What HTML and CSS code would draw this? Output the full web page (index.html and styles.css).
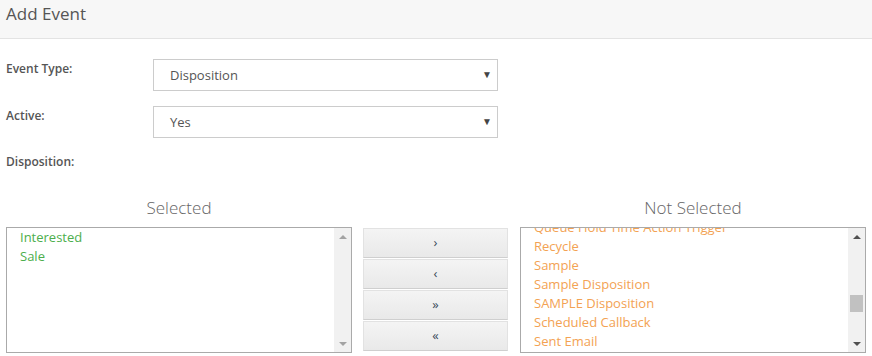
FILE: index.html
```html
<!DOCTYPE html>
<html lang="en">
<head>
  <meta charset="UTF-8">
  <title>Add Event</title>
  <link rel="stylesheet" href="styles.css">
</head>
<body>
  <!-- Header -->
  <div class="panel-heading">Add Event</div>

  <div class="panel-body">
    <!-- Form rows -->
    <div class="form-row">
      <label class="form-label">Event Type:</label>
      <div class="select-box"><span>Disposition</span><span class="caret">&#9660;</span></div>
    </div>
    <div class="form-row">
      <label class="form-label">Active:</label>
      <div class="select-box"><span>Yes</span><span class="caret">&#9660;</span></div>
    </div>
    <div class="form-row short">
      <label class="form-label">Disposition:</label>
    </div>

    <!-- Dual list picker -->
    <div class="picker">
      <div class="picker-col">
        <h4>Selected</h4>
        <div class="list-box">
          <ul class="list-items selected-items">
            <li>Interested</li>
            <li>Sale</li>
          </ul>
          <div class="scrollbar">
            <span class="arrow up"></span>
            <span class="track"></span>
            <span class="arrow down"></span>
          </div>
        </div>
      </div>

      <div class="picker-buttons">
        <button>&rsaquo;</button>
        <button>&lsaquo;</button>
        <button>&raquo;</button>
        <button>&laquo;</button>
      </div>

      <div class="picker-col">
        <h4>Not Selected</h4>
        <div class="list-box">
          <ul class="list-items other-items scrolled">
            <li>Queue Hold Time Action Trigger</li>
            <li>Recycle</li>
            <li>Sample</li>
            <li>Sample Disposition</li>
            <li>SAMPLE Disposition</li>
            <li>Scheduled Callback</li>
            <li>Sent Email</li>
          </ul>
          <div class="scrollbar dark">
            <span class="arrow up"></span>
            <span class="track"><span class="thumb"></span></span>
            <span class="arrow down"></span>
          </div>
        </div>
      </div>
    </div>
  </div>
</body>
</html>
```

FILE: styles.css
```css
body {
  margin: 0;
  font-family: "Open Sans", Arial, sans-serif;
  color: #555;
  background: #fff;
}
.panel-heading {
  height: 38px;
  line-height: 28px;
  padding: 0 6px;
  font-size: 17px;
  background-color: #f7f7f7;
  border-bottom: 1px solid #e3e3e3;
}
.panel-body {
  padding: 20px 6px 0 6px;
}
.form-row {
  display: flex;
  align-items: flex-start;
  height: 32px;
  margin-bottom: 15px;
}
.form-row.short {
  height: 20px;
  margin-bottom: 23px;
}
.form-label {
  width: 147px;
  font-size: 12px;
  font-weight: 600;
  padding-top: 1px;
}
.form-row.short .form-label {
  padding-top: 0;
}
.select-box {
  width: 345px;
  height: 32px;
  box-sizing: border-box;
  border: 1px solid #ccc;
  display: flex;
  align-items: center;
  justify-content: space-between;
  padding: 0 5px 0 16px;
  font-size: 13px;
  color: #555;
}
.select-box .caret {
  font-size: 10px;
  color: #444;
  margin-top: -3px;
}
.picker {
  display: flex;
  align-items: flex-end;
}
.picker-col {
  width: 346px;
}
.picker-col h4 {
  margin: 0 0 7px 0;
  text-align: center;
  font-size: 17px;
  font-weight: 300;
  color: #666;
  line-height: 24px;
}
.list-box {
  height: 126px;
  box-sizing: border-box;
  border: 1px solid #aaa;
  display: flex;
  overflow: hidden;
}
.list-items {
  flex: 1;
  list-style: none;
  margin: 0;
  padding: 0 0 0 13px;
  font-size: 13px;
  line-height: 19px;
}
.list-items.scrolled {
  margin-top: -10px;
}
.selected-items {
  color: #4cae4c;
}
.other-items {
  color: #f3a253;
}
.scrollbar {
  width: 17px;
  background: #f1f1f1;
  display: flex;
  flex-direction: column;
  align-items: center;
}
.scrollbar .arrow {
  height: 17px;
  width: 17px;
  display: flex;
  align-items: center;
  justify-content: center;
}
.scrollbar .arrow::before {
  content: "";
  border-left: 4px solid transparent;
  border-right: 4px solid transparent;
}
.scrollbar .up::before {
  border-bottom: 4px solid #a3a3a3;
}
.scrollbar .down::before {
  border-top: 4px solid #a3a3a3;
}
.scrollbar.dark .up::before {
  border-bottom-color: #505050;
}
.scrollbar.dark .down::before {
  border-top-color: #505050;
}
.scrollbar .track {
  flex: 1;
  width: 100%;
  display: flex;
  justify-content: center;
}
.scrollbar .thumb {
  width: 13px;
  height: 17px;
  margin-top: 50px;
  background: #c1c1c1;
}
.picker-buttons {
  width: 145px;
  margin: 0 12px 2px 11px;
  display: flex;
  flex-direction: column;
  gap: 1px;
}
.picker-buttons button {
  height: 30px;
  border: 1px solid #e2e2e2;
  border-bottom-color: #cfcfcf;
  background: linear-gradient(#f4f4f4, #e9e9e9);
  font-family: "Open Sans", Arial, sans-serif;
  font-size: 13px;
  color: #3a4a5a;
  padding: 0 0 2px 0;
  cursor: pointer;
}
```
